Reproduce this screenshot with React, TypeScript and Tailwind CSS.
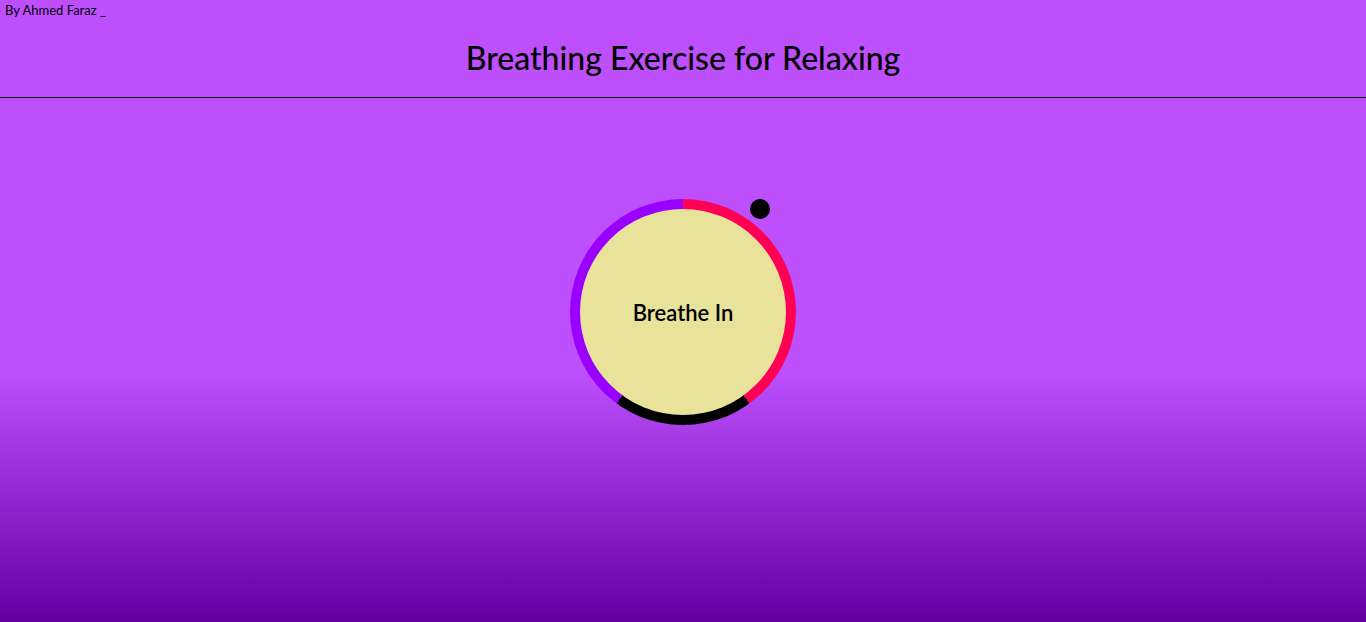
export default function App() {
  return (
    <div
      className="w-full h-[622px] overflow-hidden bg-[linear-gradient(180deg,#bd4ffd_0%,#bd4ffd_60%,#6300a0_100%)]"
      style={{ fontFamily: "Lato, 'Noto Sans', sans-serif" }}
    >
      <header className="h-[98px] border-b border-black flex flex-col">
        <div className="h-[18px] pl-[5px] pt-[2px] text-[13px] leading-[16px] text-black">By Ahmed Faraz _</div>
        <h1 className="flex-1 flex items-start justify-center pt-[20px] text-[32px] leading-[40px] font-medium text-black">
          Breathing Exercise for Relaxing
        </h1>
      </header>
      <main className="flex justify-center pt-[101px]">
        <div className="relative w-[226px] h-[226px]">
          <div className="absolute inset-0 rounded-full bg-[conic-gradient(#ff0055_0%_40%,#000000_40%_60%,#9900ff_60%_100%)]" />
          <div className="absolute inset-[10px] rounded-full bg-[#e8e29b] flex items-center justify-center">
            <span className="text-[22px] leading-[28px] pt-[2px] font-semibold text-black">Breathe In</span>
          </div>
          <div className="absolute left-[180px] top-[0px] w-[20px] h-[20px] rounded-full bg-black" />
        </div>
      </main>
    </div>
  );
}
